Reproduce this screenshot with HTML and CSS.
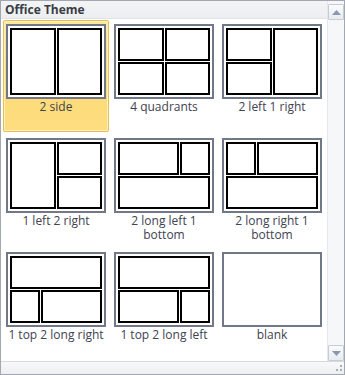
FILE: index.html
```html
<!DOCTYPE html>
<html lang="en">

<head>
    <meta charset="UTF-8">
    <meta name="viewport" content="width=device-width, initial-scale=1.0">
    <title>Layouts</title>
    <link rel="stylesheet" href="styles.css">
</head>

<body>
    <div class="panel">
        <div class="main">
            <div class="gallery">
                <div class="heading">Office Theme</div>
                <div class="grid">
                    <div class="tile selected">
                        <div class="thumb two-side"><span></span><span></span></div>
                        <div class="label">2 side</div>
                    </div>
                    <div class="tile">
                        <div class="thumb quad"><span></span><span></span><span></span><span></span></div>
                        <div class="label">4 quadrants</div>
                    </div>
                    <div class="tile">
                        <div class="thumb l2-r1"><span></span><span></span><span></span></div>
                        <div class="label">2 left 1 right</div>
                    </div>
                    <div class="tile">
                        <div class="thumb l1-r2"><span></span><span></span><span></span></div>
                        <div class="label">1 left 2 right</div>
                    </div>
                    <div class="tile">
                        <div class="thumb long-left"><span></span><span></span><span></span></div>
                        <div class="label">2 long left 1 bottom</div>
                    </div>
                    <div class="tile">
                        <div class="thumb long-right"><span></span><span></span><span></span></div>
                        <div class="label">2 long right 1 bottom</div>
                    </div>
                    <div class="tile">
                        <div class="thumb top-right"><span></span><span></span><span></span></div>
                        <div class="label">1 top 2 long right</div>
                    </div>
                    <div class="tile">
                        <div class="thumb top-left"><span></span><span></span><span></span></div>
                        <div class="label">1 top 2 long left</div>
                    </div>
                    <div class="tile">
                        <div class="thumb blank"></div>
                        <div class="label">blank</div>
                    </div>
                </div>
            </div>
            <div class="scrollbar">
                <div class="arrow">
                    <svg width="9" height="5" viewBox="0 0 9 5"><path d="M0 5 L4.5 0 L9 5 Z" fill="#8a97b2"/></svg>
                </div>
                <div class="track"></div>
                <div class="arrow">
                    <svg width="9" height="5" viewBox="0 0 9 5"><path d="M0 0 L9 0 L4.5 5 Z" fill="#8a97b2"/></svg>
                </div>
            </div>
        </div>
        <div class="footer">
            <svg class="grip" width="10" height="10" viewBox="0 0 10 10">
                <rect x="7" y="2" width="2" height="2" fill="#a9aeb6"/>
                <rect x="7" y="6" width="2" height="2" fill="#a9aeb6"/>
                <rect x="3" y="6" width="2" height="2" fill="#a9aeb6"/>
            </svg>
        </div>
    </div>
</body>

</html>
```

FILE: styles.css
```css
* {
    padding: 0;
    margin: 0;
    box-sizing: border-box;
}

body {
    font-family: 'Open Sans', 'Liberation Sans', sans-serif;
    background: #ffffff;
}

.panel {
    display: flex;
    flex-direction: column;
    width: 345px;
    height: 375px;
    border: 1px solid #a3a8b0;
    background: white;
}

.main {
    display: flex;
    flex: 1;
    min-height: 0;
}

.gallery {
    flex: 1;
    overflow: hidden;
}

.heading {
    height: 18px;
    padding: 0 4px;
    font-size: 12px;
    font-weight: 700;
    line-height: 17px;
    color: #3a3d44;
    background: linear-gradient(#f3f4f6, #eceef1);
    border-bottom: 1px solid #dfe2e7;
}

.grid {
    display: grid;
    grid-template-columns: repeat(3, 108px);
    grid-auto-rows: 114px;
    padding-left: 1px;
}

.tile {
    display: flex;
    flex-direction: column;
    align-items: center;
    margin: 1px;
    padding-top: 3px;
    border: 1px solid transparent;
    border-radius: 2px;
}

.tile.selected {
    border-color: #e6be55;
    background: linear-gradient(#fee8a0, #fdda74 45%, #fddd80);
    box-shadow: inset 0 0 0 1px #fff0c0;
}

.thumb {
    display: grid;
    grid-template-columns: 1fr 1fr;
    grid-auto-rows: 1fr;
    gap: 1px;
    width: 100px;
    height: 75px;
    padding: 2px;
    border: 2px solid #717989;
    background: white;
}

.thumb span {
    border: 2px solid #000;
}

.thumb span:nth-child(1) { grid-area: a; }
.thumb span:nth-child(2) { grid-area: b; }
.thumb span:nth-child(3) { grid-area: c; }
.thumb span:nth-child(4) { grid-area: d; }

.two-side {
    grid-template-areas: "a b";
}

.quad {
    grid-template-areas: "a b" "c d";
}

.l2-r1 {
    grid-template-areas: "a c" "b c";
}

.l1-r2 {
    grid-template-areas: "a b" "a c";
}

.long-left {
    grid-template-columns: 2fr 1fr;
    grid-template-areas: "a b" "c c";
}

.long-right {
    grid-template-columns: 1fr 2fr;
    grid-template-areas: "a b" "c c";
}

.top-right {
    grid-template-columns: 1fr 2fr;
    grid-template-areas: "a a" "b c";
}

.top-left {
    grid-template-columns: 2fr 1fr;
    grid-template-areas: "a a" "b c";
}

.label {
    width: 100px;
    margin-top: 1px;
    font-size: 12px;
    line-height: 14px;
    text-align: center;
    color: #3e4250;
}

.scrollbar {
    display: flex;
    flex-direction: column;
    width: 17px;
    padding-top: 3px;
    border-left: 1px solid #e4e7eb;
    background: #f6f7f8;
}

.arrow {
    display: flex;
    align-items: center;
    justify-content: center;
    width: 16px;
    height: 16px;
    border: 1px solid #c6ccd5;
    border-radius: 1px;
    background: linear-gradient(#fbfbfc, #e8ebef);
}

.track {
    flex: 1;
}

.footer {
    display: flex;
    justify-content: flex-end;
    align-items: flex-end;
    height: 13px;
    border-top: 1px solid #d6d9de;
    background: linear-gradient(#f9f9fa, #eceef0);
}

.grip {
    display: block;
    margin: 0 1px 1px 0;
}
```
